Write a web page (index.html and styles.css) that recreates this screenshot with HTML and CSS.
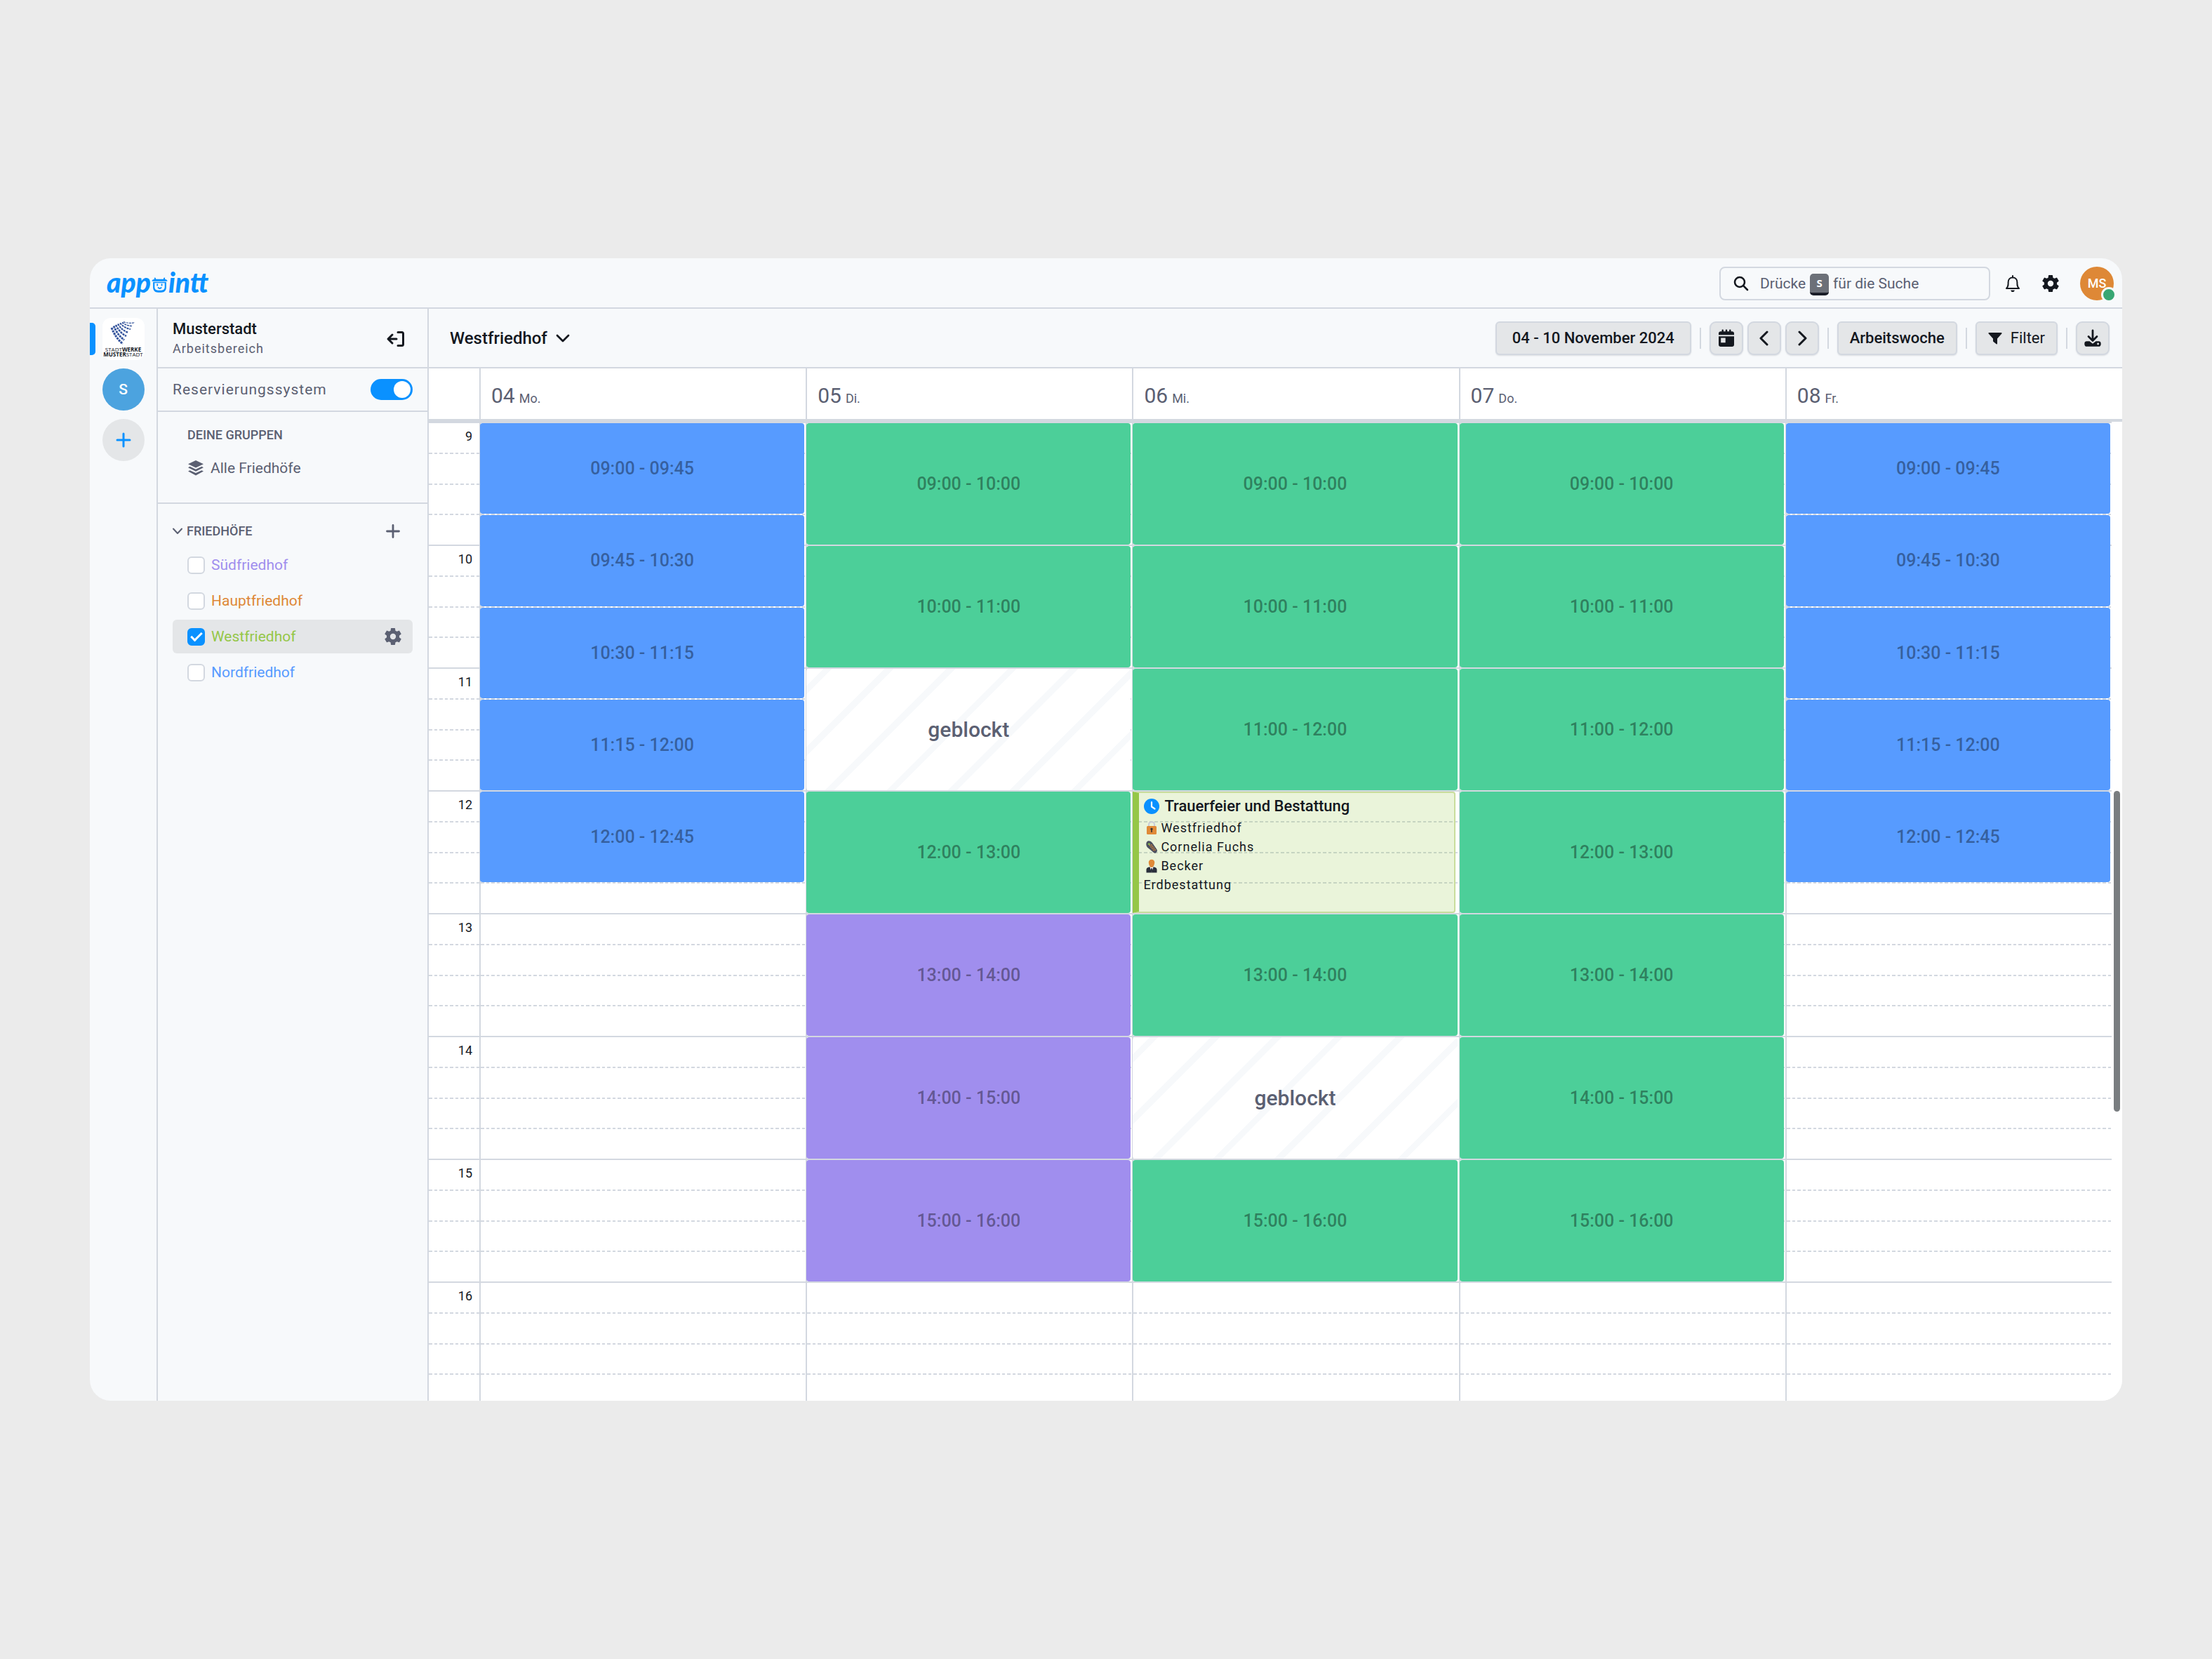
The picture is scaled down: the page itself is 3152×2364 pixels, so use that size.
FILE: index.html
```html
<!DOCTYPE html>
<html lang="de">
<head>
<meta charset="utf-8">
<meta name="viewport" content="width=device-width, initial-scale=1">
<title>appointt – Westfriedhof</title>
<link rel="stylesheet" href="styles.css">
</head>
<body>
<svg class="sprite" aria-hidden="true">
  <symbol id="cog" viewBox="2 2 20 20"><path fill="currentColor" d="M12,15.5A3.5,3.5 0 0,1 8.5,12A3.5,3.5 0 0,1 12,8.5A3.5,3.5 0 0,1 15.5,12A3.5,3.5 0 0,1 12,15.5M19.43,12.97C19.47,12.65 19.5,12.33 19.5,12C19.5,11.67 19.47,11.34 19.43,11L21.54,9.37C21.73,9.22 21.78,8.95 21.66,8.73L19.66,5.27C19.54,5.05 19.27,4.96 19.05,5.05L16.56,6.05C16.04,5.66 15.5,5.32 14.87,5.07L14.5,2.42C14.46,2.18 14.25,2 14,2H10C9.75,2 9.54,2.18 9.5,2.42L9.13,5.07C8.5,5.32 7.96,5.66 7.44,6.05L4.95,5.05C4.73,4.96 4.46,5.05 4.34,5.27L2.34,8.73C2.21,8.95 2.27,9.22 2.46,9.37L4.57,11C4.53,11.34 4.5,11.67 4.5,12C4.5,12.33 4.53,12.65 4.57,12.97L2.46,14.63C2.27,14.78 2.21,15.05 2.34,15.27L4.34,18.73C4.46,18.95 4.73,19.03 4.95,18.95L7.44,17.94C7.96,18.34 8.5,18.68 9.13,18.93L9.5,21.58C9.54,21.82 9.75,22 10,22H14C14.25,22 14.46,21.82 14.5,21.58L14.87,18.93C15.5,18.67 16.04,18.34 16.56,17.94L19.05,18.95C19.27,19.03 19.54,18.95 19.66,18.73L21.66,15.27C21.78,15.05 21.73,14.78 21.54,14.63L19.43,12.97Z"/></symbol>
</svg>

<div class="app">
  <header class="topbar">
    <a class="logo" href="#" aria-label="appointt">
      <span>app</span>
      <svg class="logo-face" viewBox="0 0 22 22" aria-hidden="true">
        <path fill="#0a91ff" d="M4 2.2c0-1 1.600-1 1.800 0l.4 1.300h9.600l.4-1.300c.2-1 1.800-1 1.800 0v1.400c2 .2 3 1 3.200 2.600H.8C1 4.600 2 3.800 4 3.600zM2.400 7.200h17.200v7c0 4.200-2.600 6.600-6.600 6.600H9c-4 0-6.600-2.400-6.600-6.600z"/>
        <path fill="#f7f9fb" d="M4.400 8.400h13.200v5.400c0 2.800-1.600 4.200-4.400 4.200H8.800c-2.800 0-4.400-1.400-4.400-4.200z"/>
        <path stroke="#0a91ff" stroke-width="1.700" stroke-linecap="round" fill="none" d="M8 10.200v1.400M13.800 10.200v1.400M9.200 14.600c1 1.300 2.800 1.300 3.800 0"/>
      </svg>
      <span>intt</span>
    </a>
    <div class="topbar-tools">
      <label class="search">
        <svg width="22" height="22" viewBox="0 0 22 22" fill="none" stroke="currentColor" stroke-width="2.600" stroke-linecap="round" aria-hidden="true"><circle cx="9" cy="9" r="7"/><path d="M14.200 14.200 20 20"/></svg>
        <span class="search-hint">Drücke <kbd>S</kbd> für die Suche</span>
        <input type="text" aria-label="Suche">
      </label>
      <div class="account">
        <button class="icon-button" type="button" aria-label="Benachrichtigungen">
          <svg width="24" height="26" viewBox="0 0 24 26" fill="none" stroke="currentColor" stroke-width="2" stroke-linejoin="round" aria-hidden="true"><path d="M3 20c1.800-1.600 2.600-3.600 2.600-6.400v-2.400C5.600 7.400 8 4.600 12 4.600s6.400 2.800 6.400 6.600v2.400c0 2.800.8 4.800 2.600 6.400z"/><path stroke-linecap="round" d="M12 2v2"/><path fill="currentColor" stroke="none" d="M9.200 22.400h5.600c-.2 1.600-1.300 2.600-2.800 2.600s-2.600-1-2.800-2.600z"/></svg>
        </button>
        <button class="icon-button" type="button" aria-label="Einstellungen"><svg width="24" height="24" aria-hidden="true"><use href="#cog"/></svg></button>
        <button class="avatar" type="button">MS<i class="status"></i></button>
      </div>
    </div>
  </header>

  <nav class="rail" aria-label="Arbeitsbereiche">
    <a class="tile tile-active" href="#">
      <svg width="38" height="34" viewBox="0 0 38 34" fill="none" stroke="#33539b" aria-hidden="true">
        <g stroke-dasharray="3 1">
          <path stroke-width="3" d="M2 10C6 20 11 27 18 33"/>
          <path stroke-width="2.800" d="M5 7.500C9 17 14 23 20 27.500"/>
          <path stroke-width="2.500" d="M8 6C12 14 17 19 23 22"/>
          <path stroke-width="2.200" d="M11 4.500C15 11 19 14.500 26 17"/>
          <path stroke-width="2" d="M14 3.400C18 8 23 11 29 12"/>
          <path stroke-width="1.600" d="M17 2.500C21 5.500 26 7.500 32 7.500"/>
          <path stroke-width="1.200" d="M19 1.600C24 3.600 30 4 35 2.500"/>
        </g>
      </svg>
      <span>STADT<b>WERKE</b></span>
      <span><b>MUSTER</b>STADT</span>
    </a>
    <a class="round round-blue" href="#">S</a>
    <button class="round round-add" type="button" aria-label="Arbeitsbereich hinzufügen">
      <svg width="22" height="22" viewBox="0 0 22 22" stroke="currentColor" stroke-width="3" stroke-linecap="round" aria-hidden="true"><path d="M11 2v18M2 11h18"/></svg>
    </button>
  </nav>

  <aside class="sidebar">
    <div class="side-head">
      <div>
        <h1>Musterstadt</h1>
        <p>Arbeitsbereich</p>
      </div>
      <button class="icon-button" type="button" aria-label="Seitenleiste schließen">
        <svg width="28" height="24" viewBox="0 0 28 24" fill="none" stroke="currentColor" stroke-width="3" stroke-linecap="round" stroke-linejoin="round" aria-hidden="true"><path d="M17 2.500h5.500c1.400 0 2 .6 2 2v15c0 1.400-.6 2-2 2H17M9 6l-6 6 6 6M3.500 12H15"/></svg>
      </button>
    </div>
    <div class="side-toggle">
      <label for="system">Reservierungssystem</label>
      <input class="switch" type="checkbox" role="switch" id="system" checked>
    </div>
    <section class="groups">
      <h2>DEINE GRUPPEN</h2>
      <a class="all" href="#">
        <svg width="24" height="24" viewBox="0 0 24 24" fill="currentColor" aria-hidden="true"><path d="M12 1 23 6.200 12 11.400 1 6.200zM3.600 9.800 12 13.700l8.400-3.900L23 11.200 12 16.800 1 11.200zM3.600 15.200 12 19.100l8.400-3.900 2.600 1.400-11 5.900-11-5.900z"/></svg>
        Alle Friedhöfe
      </a>
    </section>
    <section class="places">
      <div class="places-head">
        <button class="fold" type="button">
          <svg width="14" height="10" viewBox="0 0 14 10" fill="none" stroke="currentColor" stroke-width="2" stroke-linecap="round" stroke-linejoin="round" aria-hidden="true"><path d="m1 1.500 6 6.500 6-6.500"/></svg>
          FRIEDHÖFE
        </button>
        <button class="icon-button" type="button" aria-label="Friedhof hinzufügen">
          <svg width="24" height="24" viewBox="0 0 24 24" stroke="currentColor" stroke-width="2.800" stroke-linecap="round" aria-hidden="true"><path d="M12 3.500v17M3.500 12h17"/></svg>
        </button>
      </div>
      <ul>
        <li class="place"><label class="violet"><input type="checkbox">Südfriedhof</label></li>
        <li class="place"><label class="orange"><input type="checkbox">Hauptfriedhof</label></li>
        <li class="place selected">
          <label class="lime"><input type="checkbox" checked>Westfriedhof</label>
          <button class="icon-button" type="button" aria-label="Westfriedhof bearbeiten"><svg width="24" height="24" aria-hidden="true"><use href="#cog"/></svg></button>
        </li>
        <li class="place"><label class="blue"><input type="checkbox">Nordfriedhof</label></li>
      </ul>
    </section>
  </aside>

  <main class="main">
    <div class="toolbar">
      <button class="title" type="button" aria-haspopup="listbox">
        Westfriedhof
        <svg width="20" height="14" viewBox="0 0 20 14" fill="none" stroke="currentColor" stroke-width="2.800" stroke-linecap="round" stroke-linejoin="round" aria-hidden="true"><path d="m2 3 8 8 8-8"/></svg>
      </button>
      <div class="tools">
        <button class="btn btn-range" type="button">04 - 10 November 2024</button>
        <i class="rule"></i>
        <div class="btn-set">
          <button class="btn btn-icon" type="button" aria-label="Heute">
            <svg width="24" height="26" viewBox="0 0 24 26" fill="currentColor" aria-hidden="true"><path d="M5.500 1.500c0-1.300 2.400-1.300 2.400 0v1.700h2.900V1.500c0-1.300 2.400-1.300 2.400 0v1.700h2.900V1.500c0-1.300 2.400-1.300 2.400 0v1.700H20c1.700 0 3 1 3 2.800v2.200H1V6c0-1.800 1.300-2.800 3-2.800h1.500z"/><path fill-rule="evenodd" d="M1 10.200h22v12c0 1.700-1.300 2.800-3 2.800H4c-1.700 0-3-1.100-3-2.800zM4.200 12.500v6.800h6.500v-6.800z"/></svg>
          </button>
          <button class="btn btn-icon" type="button" aria-label="Zurück">
            <svg width="14" height="22" viewBox="0 0 14 22" fill="none" stroke="currentColor" stroke-width="3" stroke-linecap="round" stroke-linejoin="round" aria-hidden="true"><path d="m11 2-9 9 9 9"/></svg>
          </button>
          <button class="btn btn-icon" type="button" aria-label="Weiter">
            <svg width="14" height="22" viewBox="0 0 14 22" fill="none" stroke="currentColor" stroke-width="3" stroke-linecap="round" stroke-linejoin="round" aria-hidden="true"><path d="m3 2 9 9-9 9"/></svg>
          </button>
        </div>
        <i class="rule"></i>
        <button class="btn" type="button">Arbeitswoche</button>
        <i class="rule"></i>
        <button class="btn btn-filter" type="button">
          <svg width="20" height="18" viewBox="0 0 20 18" fill="currentColor" aria-hidden="true"><path d="M1.400 1h17.200c1 0 1.300.9.700 1.600L13 9.600v7c0 .8-.7 1.200-1.300.7L7.600 14c-.4-.3-.6-.6-.6-1V9.600L.7 2.600C.1 1.900.4 1 1.400 1z"/></svg>
          Filter
        </button>
        <i class="rule"></i>
        <button class="btn btn-icon" type="button" aria-label="Herunterladen">
          <svg width="26" height="26" viewBox="0 0 26 26" aria-hidden="true"><path fill="currentColor" fill-rule="evenodd" d="M4.500 17.200h4l4.500 3.600 4.500-3.600h4c1.900 0 3.200 1.200 3.200 3.200v1c0 2-1.300 3.400-3.200 3.400h-17c-1.900 0-3.200-1.400-3.200-3.400v-1c0-2 1.300-3.200 3.200-3.200zM20.600 19.600a1.400 1.400 0 1 0 0 2.800 1.400 1.400 0 1 0 0-2.800z"/><path fill="none" stroke="currentColor" stroke-width="2.800" stroke-linecap="round" stroke-linejoin="round" d="M13 2v14M7 10.500l6 6 6-6"/></svg>
        </button>
      </div>
    </div>

    <div class="days">
      <div></div>
      <div class="day">04 <small>Mo.</small></div>
      <div class="day">05 <small>Di.</small></div>
      <div class="day">06 <small>Mi.</small></div>
      <div class="day">07 <small>Do.</small></div>
      <div class="day">08 <small>Fr.</small></div>
    </div>

    <div class="calendar">
      <div class="week">
        <ol class="hours lines">
          <li>9</li><li>10</li><li>11</li><li>12</li><li>13</li><li>14</li><li>15</li><li>16</li>
        </ol>
        <div class="column lines">
          <div class="slot slot-blue" style="grid-row: 1 / span 3">09:00 - 09:45</div>
          <div class="slot slot-blue" style="grid-row: 4 / span 3">09:45 - 10:30</div>
          <div class="slot slot-blue" style="grid-row: 7 / span 3">10:30 - 11:15</div>
          <div class="slot slot-blue" style="grid-row: 10 / span 3">11:15 - 12:00</div>
          <div class="slot slot-blue" style="grid-row: 13 / span 3">12:00 - 12:45</div>
        </div>
        <div class="column lines">
          <div class="slot slot-green" style="grid-row: 1 / span 4">09:00 - 10:00</div>
          <div class="slot slot-green" style="grid-row: 5 / span 4">10:00 - 11:00</div>
          <div class="slot slot-blocked" style="grid-row: 9 / span 4">geblockt</div>
          <div class="slot slot-green" style="grid-row: 13 / span 4">12:00 - 13:00</div>
          <div class="slot slot-violet" style="grid-row: 17 / span 4">13:00 - 14:00</div>
          <div class="slot slot-violet" style="grid-row: 21 / span 4">14:00 - 15:00</div>
          <div class="slot slot-violet" style="grid-row: 25 / span 4">15:00 - 16:00</div>
        </div>
        <div class="column lines">
          <div class="slot slot-green" style="grid-row: 1 / span 4">09:00 - 10:00</div>
          <div class="slot slot-green" style="grid-row: 5 / span 4">10:00 - 11:00</div>
          <div class="slot slot-green" style="grid-row: 9 / span 4">11:00 - 12:00</div>
          <article class="event" style="grid-row: 13 / span 4">
            <h3>
              <svg width="24" height="24" viewBox="0 0 24 24" aria-hidden="true"><circle cx="12" cy="12" r="11" fill="#0a91ff"/><path fill="none" stroke="#fff" stroke-width="2.200" stroke-linecap="round" stroke-linejoin="round" d="M12 6v6.500l4.500 3"/></svg>
              Trauerfeier und Bestattung
            </h3>
            <p>
              <svg width="20" height="20" viewBox="0 0 20 20" aria-hidden="true"><path fill="none" stroke="#c9cdd6" stroke-width="2" d="M6 8V5c0-5 8-5 8 0v3"/><rect x="3" y="7" width="14" height="12" rx="1.500" fill="#e08a38"/><path fill="#3a3430" d="M10 9.800a1.700 1.700 0 0 1 .8 3.200v3H9.200v-3a1.700 1.700 0 0 1 .8-3.200z"/></svg>
              Westfriedhof
            </p>
            <p>
              <svg width="20" height="20" viewBox="0 0 20 20" aria-hidden="true"><path fill="#4b4f60" d="M4.500 1.500C7 .5 9.500 2 11 4l6.500 9.500c1.200 2-.2 3.800-1.300 4.700-1 .7-2.600.8-4-.9L4 10.500C1.500 7.500 1.800 3 4.500 1.500z"/><path fill="none" stroke="#e08a38" stroke-width="1.600" stroke-dasharray="1.500 1.300" d="m7 7 7 9M9.500 6.500l6 8"/><path fill="#8cbf4d" d="M4.800 4.600h3v2.200h-3z"/></svg>
              Cornelia Fuchs
            </p>
            <p>
              <svg width="20" height="20" viewBox="0 0 20 20" aria-hidden="true"><path fill="#2b2f3c" d="M2.500 19.500v-4.300c0-2 1.600-3.200 4-3.700h7c2.400.5 4 1.700 4 3.700v4.300z"/><path fill="#fff" d="M7.500 11.500h5L10 19z"/><path fill="#2b2f3c" d="M9.300 13h1.400l.5 4-1.200 2-1.200-2z"/><path fill="#e08a38" d="M5.800 4.600C5.800-.6 14.200-.6 14.200 4.600c0 4-1.700 7.400-4.200 7.400S5.800 8.600 5.800 4.600z"/></svg>
              Becker
            </p>
            <p>Erdbestattung</p>
          </article>
          <div class="slot slot-green" style="grid-row: 17 / span 4">13:00 - 14:00</div>
          <div class="slot slot-blocked" style="grid-row: 21 / span 4">geblockt</div>
          <div class="slot slot-green" style="grid-row: 25 / span 4">15:00 - 16:00</div>
        </div>
        <div class="column lines">
          <div class="slot slot-green" style="grid-row: 1 / span 4">09:00 - 10:00</div>
          <div class="slot slot-green" style="grid-row: 5 / span 4">10:00 - 11:00</div>
          <div class="slot slot-green" style="grid-row: 9 / span 4">11:00 - 12:00</div>
          <div class="slot slot-green" style="grid-row: 13 / span 4">12:00 - 13:00</div>
          <div class="slot slot-green" style="grid-row: 17 / span 4">13:00 - 14:00</div>
          <div class="slot slot-green" style="grid-row: 21 / span 4">14:00 - 15:00</div>
          <div class="slot slot-green" style="grid-row: 25 / span 4">15:00 - 16:00</div>
        </div>
        <div class="column lines">
          <div class="slot slot-blue" style="grid-row: 1 / span 3">09:00 - 09:45</div>
          <div class="slot slot-blue" style="grid-row: 4 / span 3">09:45 - 10:30</div>
          <div class="slot slot-blue" style="grid-row: 7 / span 3">10:30 - 11:15</div>
          <div class="slot slot-blue" style="grid-row: 10 / span 3">11:15 - 12:00</div>
          <div class="slot slot-blue" style="grid-row: 13 / span 3">12:00 - 12:45</div>
        </div>
      </div>
      <div class="scroll-thumb"></div>
    </div>
  </main>
</div>
</body>
</html>
```
FILE: styles.css
```css
:root {
  --ink: #14181f;
  --muted: #5b6072;
  --line: #d3d8e0;
  --panel: #f7f9fb;
  --fill: #e4e6e8;
  --accent: #0a91ff;
  --blue: #579bff;
  --green: #4ccf99;
  --violet: #a08eee;
  --orange: #de8836;
  --lime: #95c748;
}

*, *::before, *::after { box-sizing: border-box; }

body {
  margin: 0;
  height: 100vh;
  padding: 368px 128px;
  background: #ebebeb;
  color: var(--ink);
  font-family: Roboto, "Liberation Sans", sans-serif;
  font-size: 21px;
  line-height: 24px;
}

h1, h2, h3, p, ul, ol { margin: 0; padding: 0; font: inherit; }
ul, ol { list-style: none; }
a { color: inherit; text-decoration: none; }
svg { display: block; flex: none; }
button { margin: 0; padding: 0; border: 0; background: none; color: inherit; font: inherit; cursor: pointer; }

.sprite { position: absolute; width: 0; height: 0; }

.app {
  display: grid;
  grid-template: 72px minmax(0, 1fr) / 97px 386px minmax(0, 1fr);
  height: 100%;
  overflow: hidden;
  border-radius: 30px;
  background: var(--panel);
}

.icon-button { display: grid; place-items: center; }

/* top bar */
.topbar {
  grid-column: 1 / -1;
  display: flex;
  align-items: center;
  justify-content: space-between;
  padding: 2px 12px 0 24px;
  border-bottom: 2px solid var(--line);
}
.logo {
  display: flex;
  align-items: center;
  padding-bottom: 4px;
  color: var(--accent);
  font: italic 900 39px/40px Lato, "Liberation Sans", sans-serif;
}
.logo-face { width: 25px; height: 24px; margin-top: 8px; }
.topbar-tools { display: flex; align-items: center; gap: 20px; }
.account { display: flex; align-items: center; gap: 30px; }

.search {
  position: relative;
  display: flex;
  align-items: center;
  gap: 16px;
  width: 386px;
  height: 48px;
  padding: 0 18px;
  border: 2px solid var(--line);
  border-radius: 8px;
}
.search-hint { display: flex; align-items: center; gap: 6px; color: var(--muted); }
.search kbd {
  width: 27px;
  height: 31px;
  margin-top: 3px;
  border-bottom: 4px solid #1b1e28;
  border-radius: 5px;
  background: #6c7078;
  color: #fff;
  font: 700 15px/26px "Noto Sans", sans-serif;
  text-align: center;
}
.search input {
  position: absolute;
  inset: 0;
  width: 100%;
  border: 0;
  background: transparent;
  font: inherit;
}
.avatar {
  position: relative;
  width: 48px;
  height: 48px;
  border-radius: 50%;
  background: var(--orange);
  color: #fff;
  font-size: 18px;
  font-weight: 500;
}
.status {
  position: absolute;
  right: -4px;
  bottom: -3px;
  width: 22px;
  height: 22px;
  border: 3px solid var(--panel);
  border-radius: 50%;
  background: #37a673;
}

/* workspace rail */
.rail {
  display: flex;
  flex-direction: column;
  align-items: center;
  gap: 12px;
  padding-top: 13px;
  border-right: 2px solid var(--line);
}
.tile {
  position: relative;
  display: flex;
  flex-direction: column;
  align-items: center;
  width: 60px;
  height: 60px;
  padding-top: 4px;
  border-radius: 12px;
  background: #fff;
  font: 400 8px/7px "Open Sans", "Noto Sans", sans-serif;
}
.tile svg { margin-bottom: 3px; }
.tile-active::before {
  content: "";
  position: absolute;
  left: -18px;
  top: 7px;
  width: 8px;
  height: 46px;
  border-radius: 0 5px 5px 0;
  background: var(--accent);
}
.round {
  display: grid;
  place-items: center;
  width: 60px;
  height: 60px;
  border-radius: 50%;
}
.round-blue { background: #4ca3df; color: #fff; font-weight: 500; }
.round-add { background: var(--fill); color: var(--accent); }

/* sidebar */
.sidebar { border-right: 2px solid var(--line); color: var(--muted); }
.side-head {
  display: flex;
  align-items: center;
  justify-content: space-between;
  height: 85px;
  padding: 2px 31px 0 21px;
  border-bottom: 2px solid var(--line);
  color: var(--ink);
}
.side-head h1 { margin-bottom: 4px; font-size: 22px; font-weight: 500; }
.side-head p { color: var(--muted); font-size: 18px; letter-spacing: 1px; }
.side-toggle {
  display: flex;
  align-items: center;
  justify-content: space-between;
  height: 62px;
  padding: 0 21px;
  border-bottom: 2px solid var(--line);
  letter-spacing: 1px;
}
.switch {
  appearance: none;
  display: flex;
  align-items: center;
  justify-content: flex-end;
  width: 60px;
  height: 30px;
  margin: 0;
  padding: 0 3px;
  border-radius: 15px;
  background: var(--accent);
}
.switch::before {
  content: "";
  width: 24px;
  height: 24px;
  border-radius: 50%;
  background: #fff;
}
.groups {
  padding: 21px 42px 33px;
  border-bottom: 2px solid var(--line);
}
.groups h2, .fold { font-size: 18px; font-weight: 500; }
.groups h2 { margin-bottom: 19px; }
.all { display: flex; align-items: center; gap: 9px; height: 32px; }

.places { padding: 24px 21px 0; }
.places-head {
  display: flex;
  align-items: center;
  justify-content: space-between;
  height: 30px;
  margin-bottom: 9px;
  padding-right: 16px;
}
.fold { display: flex; align-items: center; gap: 6px; }
.places ul { display: grid; gap: 3px; }
.place {
  display: flex;
  align-items: center;
  justify-content: space-between;
  height: 48px;
  padding: 0 16px 0 21px;
  border-radius: 6px;
}
.place.selected { background: var(--fill); }
.place label { display: flex; align-items: center; gap: 9px; }
.place input {
  appearance: none;
  display: grid;
  place-items: center;
  width: 25px;
  height: 25px;
  margin: 0;
  border: 2px solid var(--line);
  border-radius: 6px;
  background: #fff;
}
.place input:checked { border-color: var(--accent); background: var(--accent); }
.place input:checked::before {
  content: "";
  width: 16px;
  height: 9px;
  margin-top: -4px;
  border: solid #fff;
  border-width: 0 0 3px 3px;
  transform: rotate(-45deg);
}
.violet { color: var(--violet); }
.orange { color: var(--orange); }
.lime { color: var(--lime); }
.blue { color: var(--blue); }

/* toolbar */
.main { display: flex; flex-direction: column; min-width: 0; background: #fff; }
.toolbar {
  display: flex;
  align-items: center;
  justify-content: space-between;
  flex: none;
  height: 85px;
  padding: 1px 18px 0 30px;
  border-bottom: 2px solid var(--line);
  background: var(--panel);
}
.title { display: flex; align-items: center; gap: 12px; font-size: 24px; font-weight: 500; }
.tools { display: flex; align-items: center; gap: 12px; }
.rule { width: 2px; height: 30px; background: var(--line); }
.btn-set { display: flex; gap: 6px; }
.btn {
  display: flex;
  align-items: center;
  justify-content: center;
  height: 48px;
  padding: 0 16px;
  border: 2px solid var(--line);
  border-radius: 6px;
  background: var(--fill);
  box-shadow: 0 1px 2px rgba(20, 24, 40, .12);
  font-size: 22px;
  font-weight: 500;
}
.btn-range { padding: 0 22px; }
.btn-icon { width: 48px; padding: 0; border-radius: 9px; }
.btn-filter { gap: 12px; font-weight: 400; }

/* calendar */
.days, .week {
  display: grid;
  grid-template-columns: 72px repeat(5, minmax(0, 1fr));
}
.days {
  flex: none;
  height: 76px;
  padding-right: 15px;
  border-bottom: 4px solid var(--line);
}
.day {
  display: flex;
  align-items: baseline;
  gap: 6px;
  padding: 21px 0 0 15px;
  border-left: 2px solid var(--line);
  color: var(--muted);
  font-size: 30px;
  line-height: 36px;
}
.day small { font-size: 18px; }

.calendar { position: relative; flex: 1; min-height: 0; overflow: hidden; }
.week { padding-right: 15px; }
.lines {
  background:
    linear-gradient(var(--line) 0 2px, transparent 2px) 0 0 / 100% 175px,
    repeating-linear-gradient(90deg, transparent 0 5px, #fff 5px 8px, transparent 8px 12px, #fff 12px 15px),
    linear-gradient(transparent 0 44px, var(--line) 44px 46px, transparent 46px 88px, var(--line) 88px 90px, transparent 90px 131px, var(--line) 131px 133px, transparent 133px) 0 0 / 100% 175px;
}
.hours { font-size: 18px; text-align: right; }
.hours li { height: 175px; padding: 9px 10px 0 0; }
.column {
  display: grid;
  grid-template-rows: repeat(32, minmax(0, 1fr));
  border-left: 2px solid var(--line);
}
.slot {
  display: grid;
  place-items: center;
  margin: 2px 2px 0 -1px;
  padding-top: 1px;
  border-radius: 4px;
  color: rgba(0, 0, 0, .4);
  font-size: 25px;
  font-weight: 500;
}
.slot-blue { background: var(--blue); }
.slot-green { background: var(--green); }
.slot-violet { background: var(--violet); }
.slot-blocked {
  background: repeating-linear-gradient(135deg, #fff 0 17px, var(--panel) 17px 26px, #fff 26px 62px);
  color: var(--muted);
  font-size: 30px;
}
.event {
  margin: 2px 5px 0 -1px;
  padding: 5px 6px;
  border: 2px solid #c9dd9c;
  border-left: 9px solid var(--lime);
  border-radius: 0 4px 4px 0;
  background: rgba(149, 199, 72, .2);
  font-size: 18px;
  line-height: 27px;
}
.event h3 {
  display: flex;
  align-items: center;
  gap: 6px;
  margin-bottom: 4px;
  font-size: 22px;
  font-weight: 500;
}
.event p { display: flex; align-items: center; gap: 3px; letter-spacing: 1px; }
.event p svg { margin-left: 2px; }

.scroll-thumb {
  position: absolute;
  top: 37.7%;
  right: 3px;
  width: 9px;
  height: 32.8%;
  border-radius: 5px;
  background: #797d80;
}
```
